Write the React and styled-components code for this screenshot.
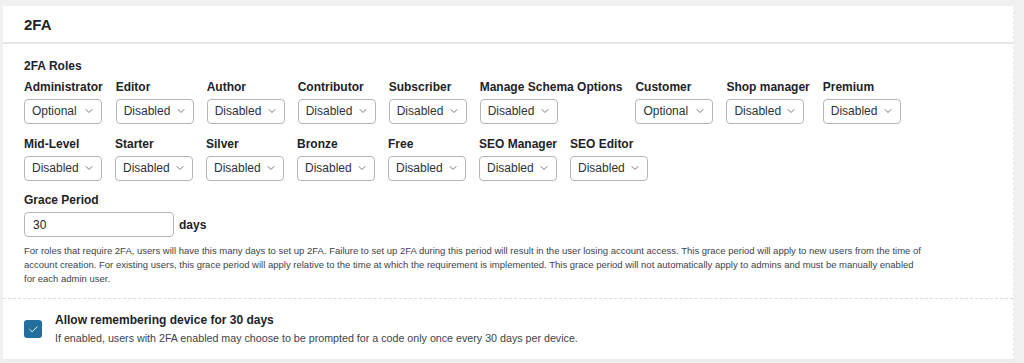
import React from 'react';
import styled, { createGlobalStyle } from 'styled-components';
import { ChevronDown, Check } from 'lucide-react';

const GlobalStyle = createGlobalStyle`
  body {
    margin: 0;
    background: #f0f0f1;
    font-family: "Liberation Sans", Arial, sans-serif;
    color: #1d2327;
  }
`;

const Panel = styled.div`
  margin: 6px 10px 0 3px;
  background: #fff;
  border-right: 1px dashed #e9e9e9;
`;

const Header = styled.h2`
  margin: 0;
  height: 36px;
  display: flex;
  align-items: center;
  padding: 0 21px;
  font-size: 15px;
  font-weight: bold;
  border-bottom: 2px solid #e6e6e6;
`;

const Body = styled.div`
  padding: 15px 21px 12px;
`;

const SectionTitle = styled.div`
  font-size: 12px;
  font-weight: bold;
  line-height: 14px;
  margin-bottom: 6.5px;
`;

const RoleGrid = styled.div`
  max-width: 960px;
  display: flex;
  flex-wrap: wrap;
  column-gap: 13px;
  row-gap: 13px;
`;

const RoleItem = styled.div`
  display: flex;
  flex-direction: column;
  gap: 4px;
`;

const FieldLabel = styled.label`
  font-size: 12px;
  font-weight: bold;
  line-height: 15px;
  white-space: nowrap;
`;

const Select = styled.div`
  box-sizing: border-box;
  width: 78px;
  height: 25px;
  display: flex;
  align-items: center;
  justify-content: space-between;
  padding: 0 6px 0 7px;
  border: 1px solid #b4b7ba;
  border-radius: 4px;
  font-size: 12px;
  color: #2c3338;
  background: #fff;
  svg {
    color: #50575e;
  }
`;

const GraceBlock = styled.div`
  margin-top: 12px;
  display: flex;
  flex-direction: column;
  gap: 4.5px;
`;

const InputRow = styled.div`
  display: flex;
  align-items: center;
  gap: 5px;
`;

const TextInput = styled.div`
  box-sizing: border-box;
  width: 150px;
  height: 25px;
  display: flex;
  align-items: center;
  padding: 0 8px;
  border: 1px solid #b4b7ba;
  border-radius: 4px;
  font-size: 12px;
`;

const Unit = styled.span`
  font-size: 12px;
  font-weight: bold;
`;

const Description = styled.p`
  margin: 7px 0 0;
  font-size: 9.5px;
  line-height: 14px;
  color: #3c434a;
`;

const CheckRow = styled.div`
  display: flex;
  align-items: flex-start;
  gap: 13px;
  padding: 13px 21px 14px;
  border-top: 1px dashed #dcdcde;
  border-bottom: 2px solid #ececec;
`;

const CheckBox = styled.span`
  flex: none;
  margin-top: 8px;
  width: 18px;
  height: 18px;
  border-radius: 3px;
  background: #226f9d;
  display: flex;
  align-items: center;
  justify-content: center;
  color: #fff;
`;

const CheckText = styled.div`
  display: flex;
  flex-direction: column;
  gap: 3px;
`;

const CheckTitle = styled.div`
  font-size: 12px;
  font-weight: bold;
  line-height: 16px;
`;

const CheckHint = styled.div`
  font-size: 10.7px;
  line-height: 14px;
  color: #3c434a;
`;

const roles = [
  ['Administrator', 'Optional'],
  ['Editor', 'Disabled'],
  ['Author', 'Disabled'],
  ['Contributor', 'Disabled'],
  ['Subscriber', 'Disabled'],
  ['Manage Schema Options', 'Disabled'],
  ['Customer', 'Optional'],
  ['Shop manager', 'Disabled'],
  ['Premium', 'Disabled'],
  ['Mid-Level', 'Disabled'],
  ['Starter', 'Disabled'],
  ['Silver', 'Disabled'],
  ['Bronze', 'Disabled'],
  ['Free', 'Disabled'],
  ['SEO Manager', 'Disabled'],
  ['SEO Editor', 'Disabled'],
];

export default function App() {
  return (
    <>
      <GlobalStyle />
      <Panel>
        <Header>2FA</Header>
        <Body>
          <SectionTitle>2FA Roles</SectionTitle>
          <RoleGrid>
            {roles.map(([name, value]) => (
              <RoleItem key={name}>
                <FieldLabel>{name}</FieldLabel>
                <Select>
                  <span>{value}</span>
                  <ChevronDown size={12} strokeWidth={1.6} />
                </Select>
              </RoleItem>
            ))}
          </RoleGrid>
          <GraceBlock>
            <FieldLabel>Grace Period</FieldLabel>
            <InputRow>
              <TextInput>30</TextInput>
              <Unit>days</Unit>
            </InputRow>
          </GraceBlock>
          <Description>
            For roles that require 2FA, users will have this many days to set up 2FA. Failure to set up 2FA during
            this period will result in the user losing account access. This grace period will apply to new users from
            the time of
            <br />
            account creation. For existing users, this grace period will apply relative to the time at which the
            requirement is implemented. This grace period will not automatically apply to admins and must be manually
            enabled
            <br />
            for each admin user.
          </Description>
        </Body>
        <CheckRow>
          <CheckBox>
            <Check size={11} strokeWidth={2} />
          </CheckBox>
          <CheckText>
            <CheckTitle>Allow remembering device for 30 days</CheckTitle>
            <CheckHint>
              If enabled, users with 2FA enabled may choose to be prompted for a code only once every 30 days per
              device.
            </CheckHint>
          </CheckText>
        </CheckRow>
      </Panel>
    </>
  );
}
